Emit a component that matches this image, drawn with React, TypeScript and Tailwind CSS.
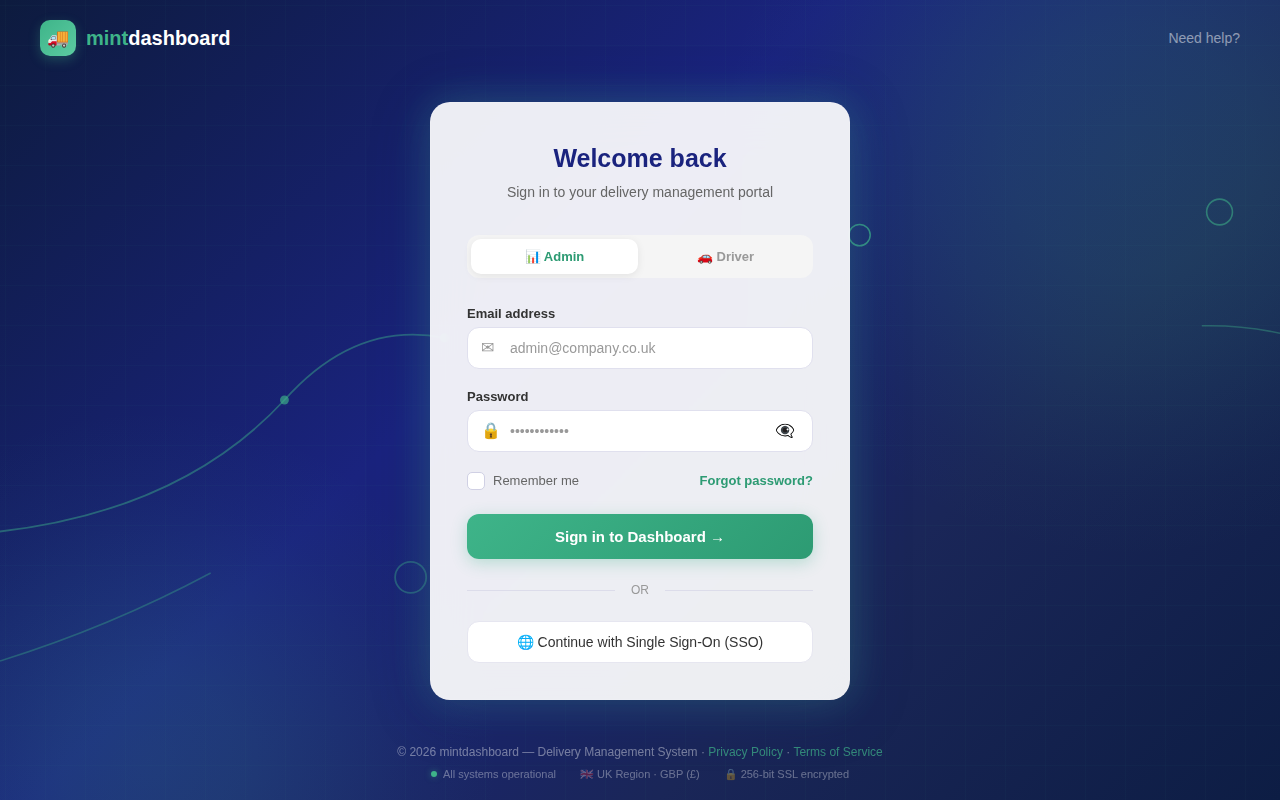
import { useState } from "react";

function Backdrop() {
  return (
    <div aria-hidden="true" className="pointer-events-none absolute inset-0 overflow-hidden">
      <div className="absolute inset-0 bg-[radial-gradient(circle_at_1130px_150px,rgba(62,180,137,0.165)_0px,rgba(62,180,137,0.15)_120px,rgba(62,180,137,0.11)_200px,rgba(62,180,137,0.055)_280px,rgba(62,180,137,0.02)_340px,rgba(62,180,137,0)_410px)]" />
      <div className="absolute inset-0 bg-[radial-gradient(circle_at_150px_760px,rgba(62,180,137,0.17)_0px,rgba(62,180,137,0.15)_90px,rgba(62,180,137,0.09)_180px,rgba(62,180,137,0.035)_260px,rgba(62,180,137,0)_350px)]" />
      <div className="absolute inset-0 bg-[linear-gradient(rgba(62,180,137,0.03)_1px,transparent_1px),linear-gradient(90deg,rgba(62,180,137,0.03)_1px,transparent_1px)] bg-[length:40px_40px] bg-[position:5px_5px]" />
      <svg
        className="absolute inset-0 size-full"
        viewBox="0 0 1440 900"
        preserveAspectRatio="xMidYMid slice"
        fill="none"
        stroke="#3EB489"
      >
        <path d="M-20 600 Q200 580 320 450 Q400 360 500 380" strokeWidth="2" opacity="0.45" />
        <path d="M0 743.6 Q124 705 237 644.6" strokeWidth="1.8" opacity="0.36" />
        <path d="M1352 366.5 Q1397 365.5 1440 375" strokeWidth="1.8" opacity="0.38" />
        <circle cx="320" cy="450" r="5" fill="#3EB489" stroke="none" opacity="0.65" />
        <circle cx="500" cy="380" r="5" fill="#3EB489" stroke="none" opacity="0.65" />
        <circle cx="462" cy="649.5" r="17.5" strokeWidth="2" opacity="0.4" />
        <circle cx="967" cy="264.5" r="12" strokeWidth="1.7" opacity="0.75" />
        <circle cx="1372" cy="238.5" r="14.5" strokeWidth="1.8" opacity="0.55" />
      </svg>
    </div>
  );
}

const fieldClass =
  "h-[42px] w-full rounded-xl border border-[#e0e0ee] bg-white pl-[42px] pr-10 text-sm text-[#333] outline-none placeholder:text-[#999] placeholder:opacity-100 focus:border-[#3EB489]";

export default function App() {
  const [role, setRole] = useState<"admin" | "driver">("admin");
  const [visible, setVisible] = useState(false);

  const tabClass = (active: boolean) =>
    active
      ? "h-[35px] flex-1 rounded-[10px] bg-white text-[13px] font-bold text-[#2D9B73] shadow-[0_2px_8px_rgba(0,0,0,0.08)]"
      : "h-[35px] flex-1 rounded-[10px] text-[13px] font-bold text-[#999]";

  return (
    <div className="relative flex min-h-screen flex-col bg-[linear-gradient(135deg,#0d1b3e_0%,#1a237e_40%,#1a2658_70%,#0d1d44_100%)] font-['Liberation_Sans',Arial,sans-serif]">
      <Backdrop />

      <header className="relative flex items-center justify-between px-10 py-5">
        <a href="#" className="flex items-center gap-2.5">
          <span className="flex size-9 items-center justify-center rounded-[10px] bg-[linear-gradient(135deg,#3EB489,#5CCBA1)] text-lg shadow-[0_4px_12px_rgba(62,180,137,0.3)]">
            🚚
          </span>
          <span className="text-xl font-bold text-white">
            <span className="text-[#3EB489]">mint</span>dashboard
          </span>
        </a>
        <a href="#" className="text-sm text-white/50">
          Need help?
        </a>
      </header>

      <main className="relative flex flex-1 items-center justify-center px-4">
        <div className="w-full max-w-[420px] rounded-[20px] border border-white/10 bg-white/92 p-9 shadow-[0_8px_60px_rgba(26,35,126,0.25),0_0_40px_rgba(62,180,137,0.35)] backdrop-blur-xl">
          <h1 className="text-center text-[25px] leading-[39px] font-bold text-[#1a237e]">Welcome back</h1>
          <p className="mt-1 text-center text-sm leading-[21px] text-[#666]">
            Sign in to your delivery management portal
          </p>

          <div role="tablist" aria-label="Account type" className="mt-8 flex gap-1 rounded-xl bg-[#f5f5f5] p-1">
            <button
              type="button"
              role="tab"
              aria-selected={role === "admin"}
              onClick={() => setRole("admin")}
              className={tabClass(role === "admin")}
            >
              📊 Admin
            </button>
            <button
              type="button"
              role="tab"
              aria-selected={role === "driver"}
              onClick={() => setRole("driver")}
              className={tabClass(role === "driver")}
            >
              🚗 Driver
            </button>
          </div>

          <form className="mt-7" onSubmit={(e) => e.preventDefault()}>
            <label htmlFor="email" className="block text-[13px] leading-[15px] font-bold text-[#333]">
              Email address
            </label>
            <div className="relative mt-1.5">
              <span aria-hidden="true" className="absolute inset-y-0 left-3.5 flex items-center text-base text-[#999]">
                ✉
              </span>
              <input id="email" type="email" placeholder="admin@company.co.uk" className={fieldClass} />
            </div>

            <label htmlFor="password" className="mt-5 block text-[13px] leading-[15px] font-bold text-[#333]">
              Password
            </label>
            <div className="relative mt-1.5">
              <span aria-hidden="true" className="absolute inset-y-0 left-3.5 flex items-center text-base text-[#999]">
                🔒
              </span>
              <input
                id="password"
                type={visible ? "text" : "password"}
                placeholder="••••••••••••"
                className={fieldClass}
              />
              <button
                type="button"
                aria-label="Show password"
                onClick={() => setVisible(!visible)}
                className="absolute inset-y-0 right-[18px] flex items-center text-base text-black"
              >
                👁‍🗨
              </button>
            </div>

            <div className="mt-5 flex h-[18px] items-center justify-between text-[13px]">
              <label className="flex items-center gap-2 text-[#666]">
                <input
                  type="checkbox"
                  className="size-[18px] appearance-none rounded-[5px] border border-[#d0d0e4] bg-white checked:bg-[#3EB489]"
                />
                Remember me
              </label>
              <a href="#" className="font-bold text-[#2D9B73]">
                Forgot password?
              </a>
            </div>

            <button
              type="submit"
              className="mt-6 h-[45px] w-full rounded-xl bg-[linear-gradient(135deg,#3EB489,#2D9B73)] text-[15px] leading-[17px] font-bold text-white shadow-[0_4px_16px_rgba(62,180,137,0.3)]"
            >
              Sign in to Dashboard →
            </button>
          </form>

          <div className="mt-6 flex items-center gap-4 text-xs leading-[14px] text-[#999]">
            <span className="h-px flex-1 bg-[#dcdcea]" />
            OR
            <span className="h-px flex-1 bg-[#dcdcea]" />
          </div>

          <button
            type="button"
            className="mt-6 h-[42px] w-full rounded-xl border border-[#e6e6f0] bg-white text-sm text-[#333]"
          >
            🌐 Continue with Single Sign-On (SSO)
          </button>
        </div>
      </main>

      <footer className="relative flex flex-col items-center gap-1 px-4 pt-4 pb-[18px] text-white/40">
        <p className="text-center text-xs leading-5">
          © 2026 mintdashboard — Delivery Management System ·{" "}
          <a href="#" className="text-[#3EB489]/70">
            Privacy Policy
          </a>{" "}
          ·{" "}
          <a href="#" className="text-[#3EB489]/70">
            Terms of Service
          </a>
        </p>
        <ul className="flex flex-wrap items-center justify-center gap-x-6 text-[11px] leading-4 text-white/35">
          <li className="flex items-center gap-1.5">
            <span className="size-1.5 rounded-full bg-[#3EB489] shadow-[0_0_6px_rgba(62,180,137,0.5)]" />
            All systems operational
          </li>
          <li>🇬🇧 UK Region · GBP (£)</li>
          <li>🔒 256-bit SSL encrypted</li>
        </ul>
      </footer>
    </div>
  );
}
